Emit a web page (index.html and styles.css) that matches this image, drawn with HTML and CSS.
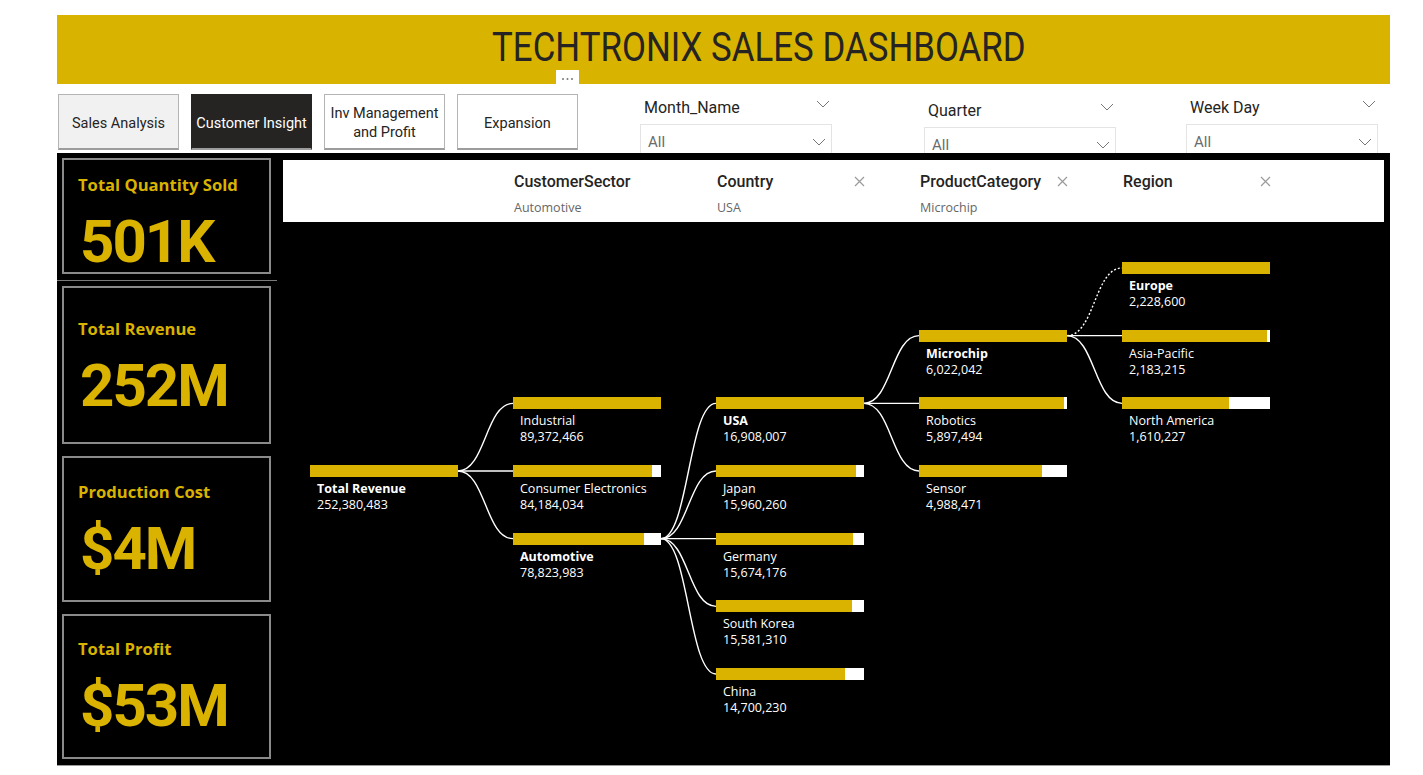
FILE: index.html
```html
<!DOCTYPE html>
<html lang="en">
<head>
<meta charset="utf-8">
<title>Techtronix Sales Dashboard</title>
<link rel="stylesheet" href="styles.css">
</head>
<body>
<div class="page">
  <header class="banner">
    <h1 class="banner-title">TECHTRONIX SALES DASHBOARD</h1>
    <div class="more"><svg width="23" height="17" viewBox="0 0 23 17"><circle cx="7" cy="9" r="1" fill="#777"/><circle cx="11.5" cy="9" r="1" fill="#777"/><circle cx="16" cy="9" r="1" fill="#777"/></svg></div>
  </header>

  <div class="toolbar">
    <nav class="navs">
      <div class="nav nav-light">Sales Analysis</div>
      <div class="nav nav-active">Customer Insight</div>
      <div class="nav">Inv Management<br>and Profit</div>
      <div class="nav">Expansion</div>
    </nav>
    <div class="slicer slicer-month">
      <div class="slicer-head"><span>Month_Name</span><svg class="chev" width="14" height="8" viewBox="0 0 14 8"><polyline points="1,1 7,7 13,1" fill="none" stroke="#777" stroke-width="1"/></svg></div>
      <div class="slicer-box"><span>All</span><svg class="chev" width="14" height="8" viewBox="0 0 14 8"><polyline points="1,1 7,7 13,1" fill="none" stroke="#777" stroke-width="1"/></svg></div>
    </div>
    <div class="slicer slicer-quarter">
      <div class="slicer-head"><span>Quarter</span><svg class="chev" width="14" height="8" viewBox="0 0 14 8"><polyline points="1,1 7,7 13,1" fill="none" stroke="#777" stroke-width="1"/></svg></div>
      <div class="slicer-box"><span>All</span><svg class="chev" width="14" height="8" viewBox="0 0 14 8"><polyline points="1,1 7,7 13,1" fill="none" stroke="#777" stroke-width="1"/></svg></div>
    </div>
    <div class="slicer slicer-week">
      <div class="slicer-head"><span>Week Day</span><svg class="chev" width="14" height="8" viewBox="0 0 14 8"><polyline points="1,1 7,7 13,1" fill="none" stroke="#777" stroke-width="1"/></svg></div>
      <div class="slicer-box"><span>All</span><svg class="chev" width="14" height="8" viewBox="0 0 14 8"><polyline points="1,1 7,7 13,1" fill="none" stroke="#777" stroke-width="1"/></svg></div>
    </div>
  </div>

  <main class="board">
    <section class="kpis">
      <div class="kpi kpi-qty">
        <div class="kpi-title">Total Quantity Sold</div>
        <div class="kpi-value">501K</div>
      </div>
      <div class="kpi kpi-rev">
        <div class="kpi-title">Total Revenue</div>
        <div class="kpi-value">252M</div>
      </div>
      <div class="kpi kpi-cost">
        <div class="kpi-title">Production Cost</div>
        <div class="kpi-value">$4M</div>
      </div>
      <div class="kpi kpi-profit">
        <div class="kpi-title">Total Profit</div>
        <div class="kpi-value">$53M</div>
      </div>
    </section>

    <section class="tree-wrap">
      <div class="crumbs">
        <div class="crumb">
          <div class="crumb-head"><span class="crumb-name">CustomerSector</span></div>
          <div class="crumb-val">Automotive</div>
        </div>
        <div class="crumb">
          <div class="crumb-head"><span class="crumb-name">Country</span><svg class="crumb-x" width="11" height="11" viewBox="0 0 11 11"><path d="M1 1 L10 10 M10 1 L1 10" stroke="#9a9a9a" stroke-width="1.2"/></svg></div>
          <div class="crumb-val">USA</div>
        </div>
        <div class="crumb">
          <div class="crumb-head"><span class="crumb-name">ProductCategory</span><svg class="crumb-x" width="11" height="11" viewBox="0 0 11 11"><path d="M1 1 L10 10 M10 1 L1 10" stroke="#9a9a9a" stroke-width="1.2"/></svg></div>
          <div class="crumb-val">Microchip</div>
        </div>
        <div class="crumb">
          <div class="crumb-head"><span class="crumb-name">Region</span><svg class="crumb-x" width="11" height="11" viewBox="0 0 11 11"><path d="M1 1 L10 10 M10 1 L1 10" stroke="#9a9a9a" stroke-width="1.2"/></svg></div>
          <div class="crumb-val"></div>
        </div>
      </div>

      <div class="canvas">
        <svg class="links" width="960" height="474" viewBox="0 0 960 474">
          <g fill="none" stroke="#fff" stroke-width="1.4">
            <path d="M148 209 C175.5 209 175.5 141.33 203 141.33"/>
            <path d="M148 209 L203 209"/>
            <path d="M148 209 C175.5 209 175.5 276.67 203 276.67"/>
            <path d="M351 276.67 C378.5 276.67 378.5 141.33 406 141.33"/>
            <path d="M351 276.67 C378.5 276.67 378.5 209 406 209"/>
            <path d="M351 276.67 L406 276.67"/>
            <path d="M351 276.67 C378.5 276.67 378.5 344.33 406 344.33"/>
            <path d="M351 276.67 C378.5 276.67 378.5 412 406 412"/>
            <path d="M554 141.33 C581.5 141.33 581.5 73.67 609 73.67"/>
            <path d="M554 141.33 L609 141.33"/>
            <path d="M554 141.33 C581.5 141.33 581.5 209 609 209"/>
            <path d="M757 73.67 C784.5 73.67 784.5 6 812 6" stroke-dasharray="2 2"/>
            <path d="M757 73.67 L812 73.67"/>
            <path d="M757 73.67 C784.5 73.67 784.5 141.33 812 141.33"/>
          </g>
        </svg>

        <div class="node c0 r3 sel"><div class="bar"><div class="fill" style="width:100%"></div></div><div class="node-name">Total Revenue</div><div class="node-val">252,380,483</div></div>

        <div class="node c1 r2"><div class="bar"><div class="fill" style="width:100%"></div></div><div class="node-name">Industrial</div><div class="node-val">89,372,466</div></div>
        <div class="node c1 r3"><div class="bar"><div class="fill" style="width:94.2%"></div></div><div class="node-name">Consumer Electronics</div><div class="node-val">84,184,034</div></div>
        <div class="node c1 r4 sel"><div class="bar"><div class="fill" style="width:88.2%"></div></div><div class="node-name">Automotive</div><div class="node-val">78,823,983</div></div>

        <div class="node c2 r2 sel"><div class="bar"><div class="fill" style="width:100%"></div></div><div class="node-name">USA</div><div class="node-val">16,908,007</div></div>
        <div class="node c2 r3"><div class="bar"><div class="fill" style="width:94.4%"></div></div><div class="node-name">Japan</div><div class="node-val">15,960,260</div></div>
        <div class="node c2 r4"><div class="bar"><div class="fill" style="width:92.7%"></div></div><div class="node-name">Germany</div><div class="node-val">15,674,176</div></div>
        <div class="node c2 r5"><div class="bar"><div class="fill" style="width:92.2%"></div></div><div class="node-name">South Korea</div><div class="node-val">15,581,310</div></div>
        <div class="node c2 r6"><div class="bar"><div class="fill" style="width:86.9%"></div></div><div class="node-name">China</div><div class="node-val">14,700,230</div></div>

        <div class="node c3 r1 sel"><div class="bar"><div class="fill" style="width:100%"></div></div><div class="node-name">Microchip</div><div class="node-val">6,022,042</div></div>
        <div class="node c3 r2"><div class="bar"><div class="fill" style="width:97.9%"></div></div><div class="node-name">Robotics</div><div class="node-val">5,897,494</div></div>
        <div class="node c3 r3"><div class="bar"><div class="fill" style="width:82.8%"></div></div><div class="node-name">Sensor</div><div class="node-val">4,988,471</div></div>

        <div class="node c4 r0 sel"><div class="bar"><div class="fill" style="width:100%"></div></div><div class="node-name">Europe</div><div class="node-val">2,228,600</div></div>
        <div class="node c4 r1"><div class="bar"><div class="fill" style="width:98%"></div></div><div class="node-name">Asia-Pacific</div><div class="node-val">2,183,215</div></div>
        <div class="node c4 r2"><div class="bar"><div class="fill" style="width:72.3%"></div></div><div class="node-name">North America</div><div class="node-val">1,610,227</div></div>
      </div>
    </section>
  </main>
</div>
</body>
</html>
```

FILE: styles.css
```css
* { box-sizing: border-box; }

body {
  margin: 0;
  background: #fff;
  font-family: "Open Sans", "Noto Sans", sans-serif;
}

.page {
  width: 1333px;
  margin-left: 57px;
  padding-top: 15px;
}

/* ---------- banner ---------- */
.banner {
  position: relative;
  height: 69px;
  background: #d8b400;
  display: flex;
  align-items: center;
  justify-content: center;
  padding: 0 0 5px 70px;
}

.banner-title {
  margin: 0;
  display: inline-block;
  font-family: Roboto, sans-serif;
  font-weight: 400;
  font-size: 41px;
  line-height: 1;
  color: #252423;
  white-space: nowrap;
  transform: scaleX(0.85);
}

.more {
  position: absolute;
  left: 499px;
  top: 55px;
  width: 23px;
  height: 17px;
  background: #fff;
}
.more svg { display: block; }

/* ---------- toolbar ---------- */
.toolbar {
  height: 69px;
  display: flex;
  align-items: flex-start;
  overflow: hidden;
}

.navs {
  display: flex;
  gap: 12px;
  margin: 10px 0 0 1px;
}

.nav {
  width: 121px;
  height: 56px;
  display: flex;
  align-items: center;
  justify-content: center;
  text-align: center;
  padding-top: 3px;
  font-family: Roboto, sans-serif;
  font-size: 14.5px;
  line-height: 19px;
  color: #252423;
  background: #fff;
  border: 1px solid #b4b4b4;
  border-bottom: 2px solid #9c9c9c;
}

.nav-light { background: #f1f1f1; }

.nav-active {
  background: #252423;
  color: #fff;
  border-color: #252423;
  border-bottom-color: #9c9c9c;
}

.slicer { width: 192px; }
.slicer-month { margin: 11px 0 0 62px; }
.slicer-quarter { margin: 14px 0 0 92px; }
.slicer-week { margin: 11px 0 0 70px; }

.slicer-head {
  height: 24px;
  display: flex;
  align-items: center;
  justify-content: space-between;
  padding: 0 2px 0 4px;
  font-family: Roboto, sans-serif;
  font-size: 16px;
  color: #252423;
}
.slicer-head .chev { margin-top: -6px; }

.slicer-box {
  margin-top: 5px;
  height: 36px;
  border: 1px solid #e4e4e4;
  display: flex;
  align-items: flex-start;
  justify-content: space-between;
  padding: 8px 5px 0 7px;
  font-family: Roboto, sans-serif;
  font-size: 15px;
  line-height: 18px;
  color: #6b6b6b;
}
.slicer-box .chev { margin-top: 5px; }

/* ---------- board ---------- */
.board {
  height: 613px;
  background: #000;
  border-bottom: 1px solid #9a9a9a;
  display: flex;
}

.kpis {
  width: 220px;
  flex: none;
  padding: 5px 6px 0 5px;
  display: flex;
  flex-direction: column;
  gap: 12px;
}

.kpi {
  position: relative;
  width: 209px;
  border: 2px solid #8a8a8a;
  display: flex;
  flex-direction: column;
  justify-content: center;
  padding: 0 0 0 14px;
  color: #d9b300;
}

.kpi-qty { height: 116px; padding-top: 13px; }
.kpi-rev { height: 158px; padding-top: 3px; }
.kpi-cost { height: 146px; padding-top: 1px; }
.kpi-profit { height: 145px; padding-top: 1px; }

.kpi-qty::after {
  content: "";
  position: absolute;
  left: -7px;
  bottom: -9px;
  width: 220px;
  height: 1px;
  background: #7a7a7a;
}

.kpi-title {
  font-family: "Open Sans", sans-serif;
  font-weight: 700;
  font-size: 16.6px;
  line-height: 22px;
  white-space: nowrap;
}

.kpi-value {
  margin-top: 16px;
  font-family: Roboto, sans-serif;
  font-weight: 700;
  font-size: 60px;
  line-height: 60px;
  letter-spacing: -2px;
  padding-left: 2px;
}

/* ---------- decomposition tree ---------- */
.tree-wrap {
  flex: 1;
  padding: 7px 6px 0 6px;
}

.crumbs {
  height: 62px;
  background: #fff;
  display: flex;
  gap: 55px;
  padding: 12px 0 0 231px;
}

.crumb { width: 148px; }

.crumb-head {
  height: 18px;
  display: flex;
  align-items: center;
  justify-content: space-between;
}

.crumb-name {
  font-family: Roboto, sans-serif;
  font-weight: 500;
  font-size: 16px;
  color: #252423;
  white-space: nowrap;
}

.crumb-val {
  margin-top: 10px;
  height: 16px;
  font-size: 12.5px;
  line-height: 16px;
  color: #666;
}

.canvas {
  position: relative;
  margin: 40px 0 0 27px;
  display: grid;
  grid-template-columns: repeat(5, 148px);
  grid-template-rows: repeat(7, 67.67px);
  column-gap: 55px;
}

.links {
  position: absolute;
  left: 0;
  top: 0;
  overflow: visible;
}

.node {
  position: relative;
  color: #fff;
}

.c0 { grid-column: 1; }
.c1 { grid-column: 2; }
.c2 { grid-column: 3; }
.c3 { grid-column: 4; }
.c4 { grid-column: 5; }
.r0 { grid-row: 1; }
.r1 { grid-row: 2; }
.r2 { grid-row: 3; }
.r3 { grid-row: 4; }
.r4 { grid-row: 5; }
.r5 { grid-row: 6; }
.r6 { grid-row: 7; }

.bar {
  height: 12px;
  width: 148px;
  background: #fff;
}

.fill {
  height: 100%;
  background: #d9b300;
}

.node-name {
  margin-top: 4px;
  padding-left: 7px;
  font-size: 12.5px;
  line-height: 16px;
  white-space: nowrap;
}

.node-val {
  padding-left: 7px;
  font-size: 12.5px;
  line-height: 16px;
}

.sel .node-name { font-weight: 700; }
```
